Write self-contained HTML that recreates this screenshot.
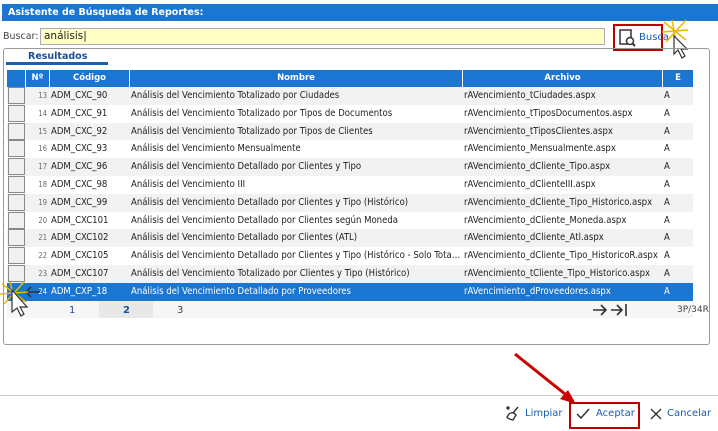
<!DOCTYPE html>
<html><head><meta charset="utf-8"><style>
*{box-sizing:border-box;margin:0;padding:0}
body{width:718px;height:431px;background:#fff;font-family:"DejaVu Sans","Liberation Sans",sans-serif;font-size:10px;color:#222;position:relative;overflow:hidden}
.abs{position:absolute}
.title{left:2px;top:4px;width:716px;height:17px;background:#1b76d1;color:#fff;font-weight:bold;font-size:9.5px;padding:3px 0 0 6px}
.lbl{left:3px;top:31px;color:#444;font-size:9.5px}
.inp{left:40px;top:28px;width:565px;height:17px;background:#ffffc4;border:1px solid #aab;font-size:10.5px;padding:1px 3px}
.btn{left:613px;top:24px;width:50px;height:27px;border:2px solid #b00;color:#1a5ab0;font-size:10px;padding:6px 0 0 24px;background:#fff}
.panel{left:3px;top:48px;width:707px;height:297px;border:1px solid #999;border-radius:3px}
.tab{left:28px;top:51px;font-weight:bold;color:#1a4f9a;font-size:9.5px}
.tabline{left:6px;top:62px;width:102px;height:3px;background:#1b5fa8}
.hdr{left:7px;top:70px;width:686px;height:17px;background:#1b76d1;color:#fff;font-weight:bold;font-size:8.5px}
.hdr div{position:absolute;top:0;height:17px;text-align:center;line-height:17px;border-left:1px solid #fff}
.row{position:absolute;left:7px;width:686px;height:17.8px;font-size:9.5px;line-height:17.8px;font-family:"DejaVu Sans Condensed","DejaVu Sans",sans-serif}
.row span{position:absolute;top:0;white-space:nowrap;overflow:hidden}
.cb{left:1px;top:0;width:17px;height:17px;border:1px solid #888;background:#f0f0f0;position:absolute}
.n{left:18px;width:22px;text-align:right;font-size:7.5px;color:#666}
.sel{background:#1b76d1;color:#fff}
.sel .n{color:#fff}
</style></head><body>
<div class="abs title">Asistente de Búsqueda de Reportes:</div>
<div class="abs lbl">Buscar:</div>
<div class="abs inp">análisis|</div>
<div class="abs btn">Busca</div>
<svg class="abs" style="left:619px;top:29px" width="18" height="18"><rect x="1" y="1" width="11" height="14" fill="none" stroke="#333" stroke-width="1.5"/><circle cx="11" cy="12" r="3.5" fill="#fff" stroke="#333" stroke-width="1.5"/><line x1="13.5" y1="14.5" x2="16" y2="17" stroke="#333" stroke-width="2"/></svg>
<svg class="abs" style="left:660px;top:18px" width="40" height="44"><g stroke="#e8b800" stroke-width="1.5"><line x1="12" y1="2" x2="16" y2="22"/><line x1="2" y1="14" x2="28" y2="12"/><line x1="4" y1="4" x2="26" y2="22"/><line x1="26" y1="2" x2="6" y2="24"/></g><path d="M14 18 L14 36 L18 32 L22 40 L25 38 L21 31 L27 31 Z" fill="#fff" stroke="#333" stroke-width="1.2"/></svg>
<div class="abs panel"></div>
<div class="abs tab">Resultados</div>
<div class="abs tabline"></div>
<div class="abs hdr">
<div style="left:0;width:18px;border-left:none"></div>
<div style="left:18px;width:24px">Nº</div>
<div style="left:42px;width:80px">Código</div>
<div style="left:122px;width:333px">Nombre</div>
<div style="left:455px;width:200px">Archivo</div>
<div style="left:655px;width:31px">E</div>
</div>
<div class="row" style="top:87px;background:#f2f2f2"><div class="cb"></div><span class="n">13</span><span style="left:44px">ADM_CXC_90</span><span style="left:124px">Análisis del Vencimiento Totalizado por Ciudades</span><span style="left:457px">rAVencimiento_tCiudades.aspx</span><span style="left:657px">A</span></div>
<div class="row" style="top:104.8px"><div class="cb"></div><span class="n">14</span><span style="left:44px">ADM_CXC_91</span><span style="left:124px">Análisis del Vencimiento Totalizado por Tipos de Documentos</span><span style="left:457px">rAVencimiento_tTiposDocumentos.aspx</span><span style="left:657px">A</span></div>
<div class="row" style="top:122.6px;background:#f2f2f2"><div class="cb"></div><span class="n">15</span><span style="left:44px">ADM_CXC_92</span><span style="left:124px">Análisis del Vencimiento Totalizado por Tipos de Clientes</span><span style="left:457px">rAVencimiento_tTiposClientes.aspx</span><span style="left:657px">A</span></div>
<div class="row" style="top:140.4px"><div class="cb"></div><span class="n">16</span><span style="left:44px">ADM_CXC_93</span><span style="left:124px">Análisis del Vencimiento Mensualmente</span><span style="left:457px">rAVencimiento_Mensualmente.aspx</span><span style="left:657px">A</span></div>
<div class="row" style="top:158.2px;background:#f2f2f2"><div class="cb"></div><span class="n">17</span><span style="left:44px">ADM_CXC_96</span><span style="left:124px">Análisis del Vencimiento Detallado por Clientes y Tipo</span><span style="left:457px">rAVencimiento_dCliente_Tipo.aspx</span><span style="left:657px">A</span></div>
<div class="row" style="top:176px"><div class="cb"></div><span class="n">18</span><span style="left:44px">ADM_CXC_98</span><span style="left:124px">Análisis del Vencimiento III</span><span style="left:457px">rAVencimiento_dClienteIII.aspx</span><span style="left:657px">A</span></div>
<div class="row" style="top:193.8px;background:#f2f2f2"><div class="cb"></div><span class="n">19</span><span style="left:44px">ADM_CXC_99</span><span style="left:124px">Análisis del Vencimiento Detallado por Clientes y Tipo (Histórico)</span><span style="left:457px">rAVencimiento_dCliente_Tipo_Historico.aspx</span><span style="left:657px">A</span></div>
<div class="row" style="top:211.6px"><div class="cb"></div><span class="n">20</span><span style="left:44px">ADM_CXC101</span><span style="left:124px">Análisis del Vencimiento Detallado por Clientes según Moneda</span><span style="left:457px">rAVencimiento_dCliente_Moneda.aspx</span><span style="left:657px">A</span></div>
<div class="row" style="top:229.4px;background:#f2f2f2"><div class="cb"></div><span class="n">21</span><span style="left:44px">ADM_CXC102</span><span style="left:124px">Análisis del Vencimiento Detallado por Clientes (ATL)</span><span style="left:457px">rAVencimiento_dCliente_Atl.aspx</span><span style="left:657px">A</span></div>
<div class="row" style="top:247.2px"><div class="cb"></div><span class="n">22</span><span style="left:44px">ADM_CXC105</span><span style="left:124px;width:330px;text-overflow:ellipsis">Análisis del Vencimiento Detallado por Clientes y Tipo (Histórico - Solo Totales)</span><span style="left:457px;width:196px;text-overflow:ellipsis">rAVencimiento_dCliente_Tipo_HistoricoR.aspx</span><span style="left:657px">A</span></div>
<div class="row" style="top:265px;background:#f2f2f2"><div class="cb"></div><span class="n">23</span><span style="left:44px">ADM_CXC107</span><span style="left:124px">Análisis del Vencimiento Totalizado por Clientes y Tipo (Histórico)</span><span style="left:457px">rAVencimiento_tCliente_Tipo_Historico.aspx</span><span style="left:657px">A</span></div>
<div class="row sel" style="top:282.8px"><span class="n">24</span><span style="left:44px">ADM_CXP_18</span><span style="left:124px">Análisis del Vencimiento Detallado por Proveedores</span><span style="left:457px">rAVencimiento_dProveedores.aspx</span><span style="left:657px">A</span></div>
<div class="abs" style="left:7px;top:301px;width:686px;height:17px;background:#f6f6f6"></div>
<div class="abs" style="left:99px;top:301px;width:54px;height:17px;background:#e8e8e8"></div>
<div class="abs" style="left:69px;top:305px;color:#1a4f9a">1</div>
<div class="abs" style="left:123px;top:305px;color:#1a4f9a;font-weight:bold">2</div>
<div class="abs" style="left:177px;top:305px;color:#444">3</div>
<div class="abs" style="left:677px;top:305px;color:#444;font-size:9px">3P/34R</div>
<svg class="abs" style="left:590px;top:302px" width="40" height="16" stroke="#333" stroke-width="1.6" fill="none"><path d="M3 8 H16 M11 3 L16 8 L11 13"/><path d="M21 8 H32 M27 3 L32 8 L27 13 M36 2 V14"/></svg>
<svg class="abs" style="left:0;top:282px" width="40" height="46"><path d="M25 10 H40 M31 5 L26 10 L31 15" stroke="#333" stroke-width="1.5" fill="none"/><g stroke="#e8b800" stroke-width="1.5"><line x1="10" y1="0" x2="16" y2="22"/><line x1="0" y1="12" x2="28" y2="10"/><line x1="2" y1="2" x2="26" y2="20"/><line x1="24" y1="0" x2="4" y2="22"/></g><path d="M12 8 L12 30 L17 26 L21 34 L24 32 L20 25 L27 25 Z" fill="#fff" stroke="#333" stroke-width="1.2"/></svg>
<div class="abs" style="left:0;top:395px;width:718px;height:1px;background:#ccc"></div>
<svg class="abs" style="left:510px;top:350px" width="75" height="62"><line x1="5" y1="4" x2="60" y2="48" stroke="#c00" stroke-width="3"/><path d="M66 54 L50 49 L58 40 Z" fill="#c00"/></svg>
<svg class="abs" style="left:505px;top:405px" width="16" height="16" stroke="#333" stroke-width="1.4" fill="none"><path d="M13 2 L8 8 M4 9 Q8 6 11 10 L8 15 Q3 14 2 12 Z"/><circle cx="3" cy="3" r="1" fill="#333"/></svg>
<div class="abs" style="left:525px;top:408px;color:#1a5ab0;font-size:10px">Limpiar</div>
<div class="abs" style="left:569px;top:402px;width:71px;height:27px;border:2px solid #b00"></div>
<svg class="abs" style="left:575px;top:407px" width="16" height="14"><path d="M2 7 L6 11 L14 2" stroke="#333" stroke-width="1.5" fill="none"/></svg>
<div class="abs" style="left:596px;top:408px;color:#1a5ab0;font-size:10px">Aceptar</div>
<svg class="abs" style="left:649px;top:407px" width="14" height="14" stroke="#333" stroke-width="1.4"><path d="M2 2 L12 12 M12 2 L2 12"/></svg>
<div class="abs" style="left:667px;top:408px;color:#1a5ab0;font-size:10px">Cancelar</div>
</body></html>
